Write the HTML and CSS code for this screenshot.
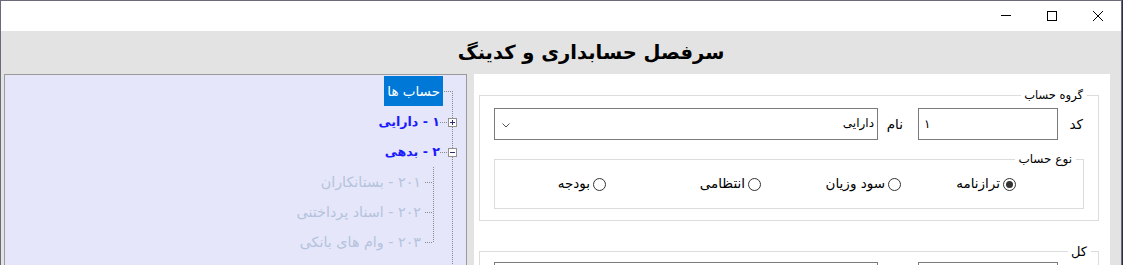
FILE: index.html
```html
<!DOCTYPE html>
<html lang="fa">
<head>
<meta charset="utf-8">
<title>سرفصل حسابداری و کدینگ</title>
<link rel="stylesheet" href="styles.css">
</head>
<body>
<div class="window">
  <div class="titlebar">
    <div class="tb-btn"><svg width="10" height="10" viewBox="0 0 10 10"><path d="M0 4.5H10" stroke="#000" stroke-width="1"/></svg></div>
    <div class="tb-btn"><svg width="10" height="10" viewBox="0 0 10 10"><rect x="0.5" y="0.5" width="9" height="9" fill="none" stroke="#000" stroke-width="1"/></svg></div>
    <div class="tb-btn"><svg width="10" height="10" viewBox="0 0 10 10"><path d="M0 0L10 10M10 0L0 10" stroke="#000" stroke-width="1"/></svg></div>
  </div>
  <div class="client">
    <div class="header"><h1 class="title">سرفصل حسابداری و کدینگ</h1></div>
    <div class="main">
      <div class="tree">
        <div class="row row-root">
          <span class="g0 g0-root"></span>
          <span class="node-root">حساب ها</span>
        </div>
        <div class="row">
          <span class="g0 g0-node"><span class="exp"><svg width="9" height="9" viewBox="0 0 9 9"><rect x="0.5" y="0.5" width="8" height="8" fill="#fff" stroke="#919191"/><path d="M2 4.5H7M4.5 2V7" stroke="#2b2b7a"/></svg></span></span>
          <span class="node">۱ - دارایی</span>
        </div>
        <div class="row">
          <span class="g0 g0-node"><span class="exp"><svg width="9" height="9" viewBox="0 0 9 9"><rect x="0.5" y="0.5" width="8" height="8" fill="#fff" stroke="#919191"/><path d="M2 4.5H7" stroke="#2b2b7a"/></svg></span></span>
          <span class="node">۲ - بدهی</span>
        </div>
        <div class="row">
          <span class="g0 g0-pass"></span>
          <span class="g1"></span>
          <span class="leaf">۲۰۱ - بستانکاران</span>
        </div>
        <div class="row">
          <span class="g0 g0-pass"></span>
          <span class="g1"></span>
          <span class="leaf">۲۰۲ - اسناد پرداختنی</span>
        </div>
        <div class="row">
          <span class="g0 g0-pass"></span>
          <span class="g1 g1-last"></span>
          <span class="leaf">۲۰۳ - وام های بانکی</span>
        </div>
        <div class="row">
          <span class="g0 g0-node"><span class="exp"><svg width="9" height="9" viewBox="0 0 9 9"><rect x="0.5" y="0.5" width="8" height="8" fill="#fff" stroke="#919191"/><path d="M2 4.5H7M4.5 2V7" stroke="#2b2b7a"/></svg></span></span>
          <span class="node">۳ - سرمایه</span>
        </div>
      </div>
      <div class="panel">
        <div class="group group-main">
          <span class="legend legend-main">گروه حساب</span>
          <div class="field-row">
            <span class="lbl lbl-code">کد</span>
            <div class="textbox">۱</div>
            <span class="lbl lbl-name">نام</span>
            <div class="combo">
              <span class="combo-text">دارایی</span>
              <svg class="chev" width="8" height="5" viewBox="0 0 8 5"><path d="M0.5 0.5L4 4L7.5 0.5" fill="none" stroke="#555" stroke-width="1"/></svg>
            </div>
          </div>
          <div class="group group-type">
            <span class="legend legend-type">نوع حساب</span>
            <div class="radios">
              <label class="opt opt-a"><span class="radio checked"></span><span class="opt-text">ترازنامه</span></label>
              <label class="opt opt-b"><span class="radio"></span><span class="opt-text">سود وزیان</span></label>
              <label class="opt opt-c"><span class="radio"></span><span class="opt-text">انتظامی</span></label>
              <label class="opt"><span class="radio"></span><span class="opt-text">بودجه</span></label>
            </div>
          </div>
        </div>
        <div class="group group-kol">
          <span class="legend legend-kol">کل</span>
          <div class="field-row">
            <span class="lbl lbl-code"></span>
            <div class="textbox"></div>
            <span class="lbl lbl-name"></span>
            <div class="combo"></div>
          </div>
        </div>
      </div>
    </div>
  </div>
</div>
</body>
</html>
```

FILE: styles.css
```css
html, body {
  margin: 0;
  padding: 0;
  overflow: hidden;
  background: #2d2d50;
}

body {
  font-family: "DejaVu Sans", sans-serif;
}

.window {
  width: 1120px;
  height: 300px;
  border: 1px solid #6a6a78;
  border-bottom: none;
  background: #e3e3e3;
  overflow: hidden;
  display: flex;
  flex-direction: column;
}

.titlebar {
  height: 30px;
  background: #ffffff;
  display: flex;
  justify-content: flex-end;
}

.tb-btn {
  width: 46px;
  height: 30px;
  display: flex;
  align-items: center;
  justify-content: center;
}

.tb-btn svg {
  display: block;
}

.client {
  flex: 1;
  display: flex;
  flex-direction: column;
}

.header {
  height: 43px;
  display: flex;
  justify-content: center;
  align-items: center;
  padding-left: 60px;
}

.title {
  margin: 0;
  font-size: 19.5px;
  font-weight: bold;
  line-height: 43px;
  color: #000;
  direction: rtl;
}

.main {
  flex: 1;
  display: flex;
  padding-left: 3px;
  gap: 7px;
}

/* ---------- tree ---------- */
.tree {
  width: 461px;
  border: 1px solid #9a9a9a;
  background: #e6e6fa;
  padding-top: 1px;
  direction: rtl;
}

.row {
  height: 30px;
  display: flex;
  align-items: stretch;
}

.row-root {
  height: 31px;
}

.g0 {
  width: 26px;
  flex: none;
  display: flex;
}

.g0-root {
  background:
    repeating-linear-gradient(to right, #8a8a8a 0 1px, transparent 1px 2px) 0 15px / 12px 1px no-repeat,
    repeating-linear-gradient(to bottom, #8a8a8a 0 1px, transparent 1px 2px) 12px 15px / 1px 16px no-repeat;
}

.g0-node {
  background:
    repeating-linear-gradient(to right, #8a8a8a 0 1px, transparent 1px 2px) 0 15px / 8px 1px no-repeat,
    repeating-linear-gradient(to bottom, #8a8a8a 0 1px, transparent 1px 2px) 12px 0 / 1px 100% no-repeat;
}

.g0-pass {
  background:
    repeating-linear-gradient(to bottom, #8a8a8a 0 1px, transparent 1px 2px) 12px 0 / 1px 100% no-repeat;
}

.exp {
  margin-top: 11px;
  margin-right: 9px;
  width: 9px;
  height: 9px;
}

.exp svg {
  display: block;
}

.g1 {
  width: 19px;
  flex: none;
  background:
    repeating-linear-gradient(to right, #8a8a8a 0 1px, transparent 1px 2px) 4px 15px / 8px 1px no-repeat,
    repeating-linear-gradient(to bottom, #8a8a8a 0 1px, transparent 1px 2px) 12px 0 / 1px 100% no-repeat;
}

.g1-last {
  background:
    repeating-linear-gradient(to right, #8a8a8a 0 1px, transparent 1px 2px) 4px 15px / 8px 1px no-repeat,
    repeating-linear-gradient(to bottom, #8a8a8a 0 1px, transparent 1px 2px) 12px 0 / 1px 16px no-repeat;
}

.node-root {
  height: 30px;
  line-height: 30px;
  padding: 0 3px;
  margin-right: -3px;
  background: #0078d7;
  color: #ffffff;
  font-size: 13.5px;
}

.node {
  line-height: 30px;
  font-size: 12.6px;
  font-weight: bold;
  color: #1a1aff;
}

.leaf {
  line-height: 30px;
  font-size: 14.3px;
  color: #b3c3dc;
}

/* ---------- right panel ---------- */
.panel {
  width: 620px;
  background: #ffffff;
  padding: 21px 11px 0 5px;
  direction: rtl;
  font-size: 12px;
  color: #000;
}

.group {
  position: relative;
  border: 1px solid #dcdcdc;
}

.group-main {
  padding: 12px 14px 11px 14px;
}

.group-kol {
  margin-top: 30px;
  padding: 10px 14px 20px 14px;
}

.legend {
  position: absolute;
  top: -8px;
  background: #ffffff;
  line-height: 15px;
  padding: 0 4px 0 3px;
}

.legend-main {
  right: 11px;
  font-size: 11.5px;
}

.legend-type {
  right: 7px;
}

.legend-kol {
  right: 7px;
  font-size: 13px;
}

.field-row {
  display: flex;
  height: 32px;
}

.lbl {
  flex: none;
  display: flex;
  align-items: center;
  font-size: 13.5px;
}

.lbl-code {
  width: 25px;
  padding-right: 1px;
}

.lbl-name {
  width: 25px;
  padding-right: 15px;
}

.textbox {
  width: 138px;
  border: 1px solid #7a7a7a;
  display: flex;
  align-items: center;
  direction: ltr;
  justify-content: flex-start;
  text-indent: 5px;
}

.combo {
  flex: 1;
  border: 1px solid #7a7a7a;
  display: flex;
  align-items: center;
  justify-content: space-between;
  padding: 0 3px 0 7px;
}

.combo-text {
  padding-bottom: 2px;
}

.chev {
  display: block;
  margin-top: 2px;
}

.group-type {
  margin-top: 19px;
  height: 48px;
}

.radios {
  height: 48px;
  display: flex;
  align-items: center;
  padding-right: 67px;
}

.opt {
  display: flex;
  align-items: center;
  gap: 3px;
  flex: none;
  font-size: 13.5px;
}

.opt-a { width: 115px; }
.opt-b { width: 140px; }
.opt-c { width: 155px; }

.radio {
  width: 11px;
  height: 11px;
  border: 1px solid #333333;
  border-radius: 50%;
  background: #ffffff;
  display: flex;
  align-items: center;
  justify-content: center;
  flex: none;
}

.radio.checked::after {
  content: "";
  width: 7px;
  height: 7px;
  border-radius: 50%;
  background: #333333;
}

.opt-text {
  padding-bottom: 2px;
}
```
